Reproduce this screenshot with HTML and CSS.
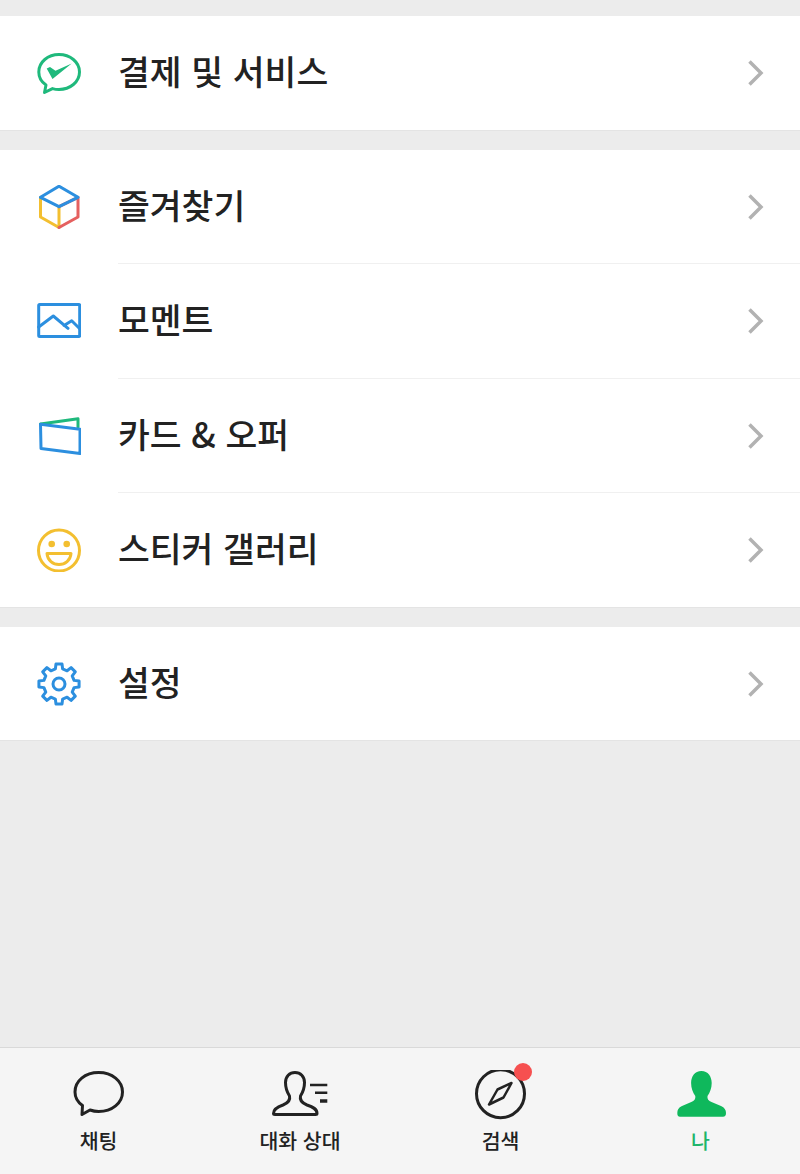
FILE: index.html
```html
<!DOCTYPE html>
<html lang="ko">
<head>
<meta charset="utf-8">
<title>나</title>
<link rel="stylesheet" href="styles.css">
</head>
<body>
<div class="app">
  <main class="content">
    <section class="group">
      <div class="row">
        <svg class="icon" viewBox="0 0 44 44"><path class="s-green" d="M15.500 37.600C17.500 38.200 19.700 38.500 22 38.500 33 38.500 42.500 31 42.500 21 42.500 11 33 3.500 22 3.500 11 3.500 1.800 11 1.800 21 1.800 26.500 4.500 31 9 34L7.500 41.500z"/><path class="f-green" d="M9.700 17.500L13 16 18.500 19.800 34.700 12.500 15.500 28z"/></svg>
        <span class="label">결제 및 서비스</span>
        <svg class="chev" viewBox="0 0 20 30"><path d="M5.500 3.500L17 15 5.500 26.500"/></svg>
      </div>
    </section>
    <section class="group">
      <div class="row sep">
        <svg class="icon" viewBox="0 0 44 44"><path class="s-yellow" d="M22 21.700V42.500L3.500 32V12.300"/><path class="s-red" d="M22 42.500L41 32V12.300L22 21.700"/><path class="s-blue" d="M3.500 12.300L22 1.200 41 12.300 22 21.700z"/></svg>
        <span class="label">즐겨찾기</span>
        <svg class="chev" viewBox="0 0 20 30"><path d="M5.500 3.500L17 15 5.500 26.500"/></svg>
      </div>
      <div class="row sep">
        <svg class="icon" viewBox="0 0 44 44"><rect class="s-blue" x="1.700" y="5.500" width="41" height="32" rx="1"/><path class="s-blue" d="M1.700 28L16.300 17 31 29.300M27 26.500L34.700 21.700 42.500 29.500"/></svg>
        <span class="label">모멘트</span>
        <svg class="chev" viewBox="0 0 20 30"><path d="M5.500 3.500L17 15 5.500 26.500"/></svg>
      </div>
      <div class="row sep">
        <svg class="icon" viewBox="0 0 44 44"><path class="s-green" d="M3.500 10L41 4.800V13.300"/><path class="s-blue" d="M3.500 10.300L43 15.200V39.500L4 34.500z"/></svg>
        <span class="label">카드 &amp; 오퍼</span>
        <svg class="chev" viewBox="0 0 20 30"><path d="M5.500 3.500L17 15 5.500 26.500"/></svg>
      </div>
      <div class="row">
        <svg class="icon" viewBox="0 0 44 44"><circle class="s-yellow" cx="22" cy="22.500" r="20.500"/><circle class="f-yellow" cx="14.700" cy="16" r="3.300"/><circle class="f-yellow" cx="29.700" cy="16" r="3.300"/><path class="s-yellow" d="M10 25.500H34C33.500 32.500 28 36.500 22 36.500S10.500 32.500 10 25.500z"/></svg>
        <span class="label">스티커 갤러리</span>
        <svg class="chev" viewBox="0 0 20 30"><path d="M5.500 3.500L17 15 5.500 26.500"/></svg>
      </div>
    </section>
    <section class="group">
      <div class="row">
        <svg class="icon" viewBox="0 0 44 44"><path class="s-blue" d="M18.380 6.930L19 1.920H25L25.620 6.930 30.100 8.780 34.070 5.680 38.320 9.930 35.220 13.900 37.070 18.380 42.080 19V25L37.070 25.620 35.220 30.100 38.320 34.070 34.070 38.320 30.100 35.220 25.620 37.070 25 42.080H19L18.380 37.070 13.900 35.220 9.930 38.320 5.680 34.070 8.780 30.100 6.930 25.620 1.920 25V19L6.930 18.380 8.780 13.900 5.680 9.930 9.930 5.680 13.900 8.780z"/><circle class="s-blue" cx="22" cy="22" r="6"/></svg>
        <span class="label">설정</span>
        <svg class="chev" viewBox="0 0 20 30"><path d="M5.500 3.500L17 15 5.500 26.500"/></svg>
      </div>
    </section>
  </main>
  <nav class="tabbar">
    <div class="tab">
      <svg class="tab-icon" viewBox="0 0 54 50"><path class="s-dark" d="M25.700 2.500C12 2.500 2 11 2 22 2 27.500 4.500 32 9.500 35.500L9 44.500 17 40C19.500 40.900 22.500 41.500 25.700 41.500 39 41.500 49.500 33 49.500 22 49.500 11 39 2.500 25.700 2.500z"/></svg>
      <span class="tab-label first-label">채팅</span>
    </div>
    <div class="tab">
      <svg class="tab-icon wide" viewBox="0 0 60 50"><path class="s-dark" d="M3.500 43.500C3.500 39 7 37 13 35 18 33 20.500 30 19.500 26 17 22 15.500 17 15.500 12.500 15.500 6.500 19.500 2.500 25 2.500S34.500 6.500 34.500 12.500C34.500 17 33 22 30.500 26 29.500 30 32 33 37 35 43 37 47 39 47 43.500 47 44.500 46.500 44.500 45.500 44.500H5C4 44.500 3.500 44.500 3.500 43.500z"/><path class="s-dark thin" d="M40 15H57.300M45 22.700H57.300"/><path class="s-dark thick" d="M50 31H57.300"/></svg>
      <span class="tab-label">대화 상대</span>
    </div>
    <div class="tab">
      <span class="badge-wrap">
        <svg class="tab-icon" viewBox="0 0 54 50"><circle class="s-dark" cx="27.500" cy="23.700" r="24"/><path class="s-dark thin" d="M38.500 13L24.500 19.500 16 34.500 30.500 27.500z"/></svg>
        <span class="badge"></span>
      </span>
      <span class="tab-label shift-label">검색</span>
    </div>
    <div class="tab active">
      <svg class="tab-icon" viewBox="0 0 54 50"><path class="f-active" d="M28.400 1C35 1 38.700 6.500 38.700 13 38.700 18 37 22.500 34.500 26 34 29 35.500 31 38.500 32L48 36C51.500 37.500 53 40 53 43 53 45.500 52 46.700 50 46.700H7C5 46.700 4.300 45.500 4.300 43 4.300 40 5.500 37.500 9 36L18.300 32C21.300 31 22.800 29 22.300 26 19.800 22.500 18.100 18 18.100 13 18.100 6.500 21.800 1 28.400 1z"/></svg>
      <span class="tab-label shift-label">나</span>
    </div>
  </nav>
</div>
</body>
</html>
```
FILE: styles.css
```css
* { box-sizing: border-box; }
html, body { margin: 0; padding: 0; }
body {
  background: #ececec;
  font-family: "Noto Sans CJK KR", "Noto Sans", sans-serif;
  color: #222;
}
.app {
  width: 800px;
  height: 1174px;
  display: flex;
  flex-direction: column;
  overflow: hidden;
}
.content {
  flex: 1;
  padding-top: 16px;
  display: flex;
  flex-direction: column;
  gap: 19px;
}
.group {
  background: #fff;
  box-shadow: inset 0 -1px 0 #e4e4e4;
}
.row {
  height: 114.500px;
  display: flex;
  align-items: center;
  padding: 0 36px 0 37px;
  position: relative;
}
.sep::after {
  content: "";
  position: absolute;
  left: 118px;
  right: 0;
  bottom: 0;
  height: 1px;
  background: #f0f0f0;
}
.icon {
  width: 44px;
  height: 44px;
  flex: none;
  margin-right: 37px;
  fill: none;
}
.label {
  flex: 1;
  font-size: 34.600px;
  font-weight: 500;
  line-height: 1;
  padding-bottom: 5px;
  white-space: pre;
}
.chev {
  width: 20px;
  height: 30px;
  flex: none;
  fill: none;
  stroke: #b2b2b2;
  stroke-width: 3.500;
}
.s-green, .s-blue, .s-yellow, .s-red { fill: none; stroke-width: 3; stroke-linejoin: round; stroke-linecap: round; }
.s-green { stroke: #1fb97c; }
.s-blue { stroke: #2c8fdf; }
.s-yellow { stroke: #f3bf30; }
.s-red { stroke: #e5605f; }
.f-green { fill: #1fb97c; }
.f-yellow { fill: #f3bf30; }
.tabbar {
  height: 127px;
  flex: none;
  background: #f5f5f5;
  border-top: 1px solid #d9d9d9;
  display: grid;
  grid-template-columns: repeat(4, 1fr);
}
.tab {
  display: flex;
  flex-direction: column;
  align-items: center;
  padding-top: 22px;
}
.tab-icon {
  width: 54px;
  height: 50px;
  display: block;
  fill: none;
}
.tab-icon.wide { width: 60px; }
.tab-label {
  margin-top: 5px;
  font-size: 20.500px;
  font-weight: 500;
  line-height: 30px;
  white-space: pre;
}
.first-label { margin-right: 3px; }
.shift-label { margin-left: 1px; }
.s-dark { fill: none; stroke: #222; stroke-width: 3; stroke-linejoin: round; }
.thin { stroke-width: 2.500; }
.thick { stroke-width: 3.500; }
.f-active { fill: #0fb85c; }
.active .tab-label { color: #1fb56a; }
.badge-wrap { position: relative; display: block; }
.badge {
  position: absolute;
  top: -7px;
  right: -4.500px;
  width: 18px;
  height: 18px;
  border-radius: 50%;
  background: #f65050;
}
```
